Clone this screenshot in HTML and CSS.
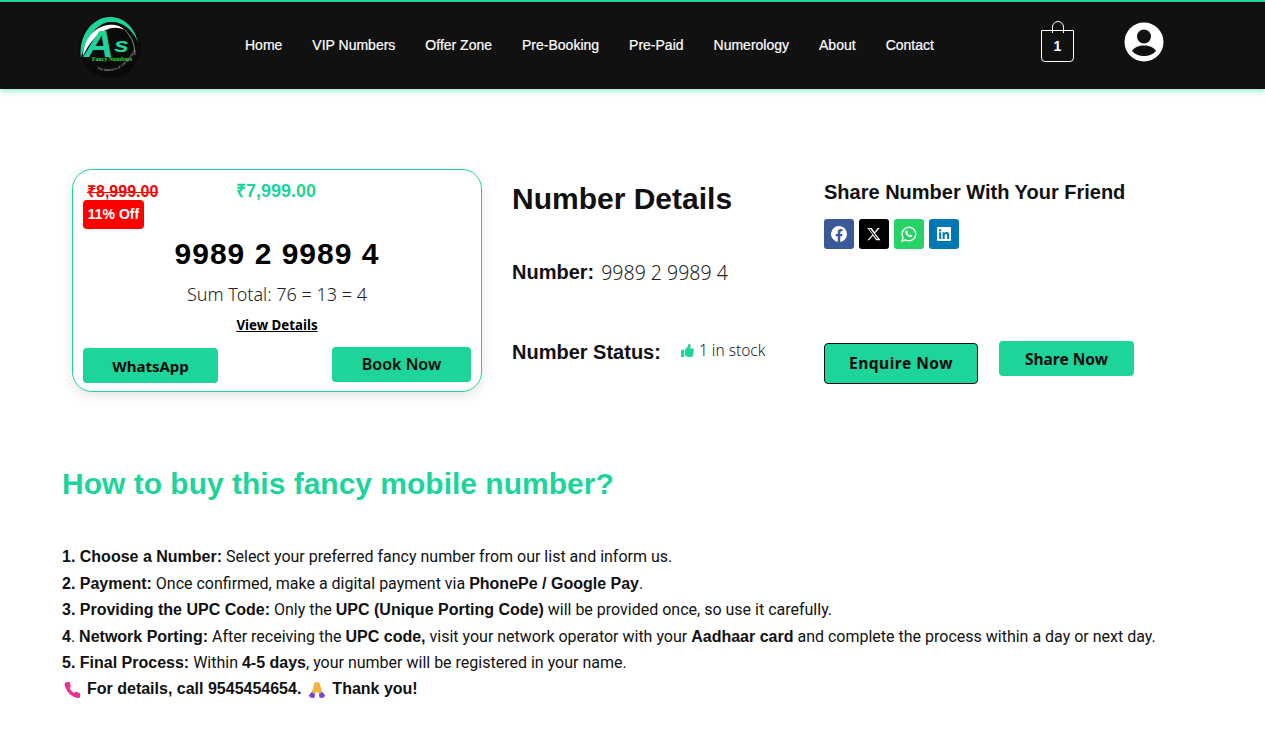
FILE: index.html
```html
<!DOCTYPE html>
<html lang="en">
<head>
<meta charset="utf-8">
<title>Number Details</title>
<link rel="stylesheet" href="styles.css">
</head>
<body>
<header class="site-header">
  <div class="logo">
    <svg width="64" height="64" viewBox="0 0 64 64" aria-hidden="true">
      <circle cx="32" cy="32" r="31" fill="#0a0a0a"/>
      <path d="M3 43C0 20 15 2 32 2c14 0 24 10 28 25C54 14 44 6 32 7 18 8 8 24 3 43z" fill="#1dd49a"/>
      <path d="M5 41C6 24 16 12 30 10c6-1 12 0 17 5-7-3-13-3-19 0C18 19 10 30 5 41z" fill="#fff"/>
      <path d="M47 15c6 6 10 14 10 25" fill="none" stroke="#bbb" stroke-width=".7"/>
      <text x="6" y="42" class="logo-a" textLength="30" lengthAdjust="spacingAndGlyphs">A</text>
      <text x="36" y="37" class="logo-s" textLength="15" lengthAdjust="spacingAndGlyphs">s</text>
      <text x="14" y="46" class="logo-sub" textLength="40" lengthAdjust="spacingAndGlyphs">Fancy Numbers</text>
      <path id="logo-curve" d="M19 54C36 61 55 50 60 27" fill="none"/>
      <text class="logo-tiny"><textPath href="#logo-curve">The Masters of VIP Numbers</textPath></text>
    </svg>
  </div>
  <nav class="nav">
    <a>Home</a><a>VIP Numbers</a><a>Offer Zone</a><a>Pre-Booking</a><a>Pre-Paid</a><a>Numerology</a><a>About</a><a>Contact</a>
  </nav>
  <div class="bag">
    <svg class="bag-handle" width="12" height="12" viewBox="0 0 12 12" aria-hidden="true"><path d="M.5 12V6a5.500 5.500 0 0 1 11 0v6" fill="none" stroke="#fff" stroke-width="1"/></svg>
    <span class="bag-count">1</span>
  </div>
  <svg class="user" width="40" height="40" viewBox="0 0 40 40" aria-hidden="true">
    <circle cx="20" cy="20" r="19.500" fill="#fff"/>
    <circle cx="20" cy="14.500" r="7" fill="#111"/>
    <path d="M8 29c2.500-4 7-5.500 12-5.500S29.500 25 32 29c-3 3.500-7 5-12 5s-9-1.500-12-5z" fill="#111"/>
  </svg>
</header>

<main class="main">
  <section class="product">
    <div class="card">
      <div class="prices">
        <del class="old">₹8,999.00</del>
        <span class="new">₹7,999.00</span>
      </div>
      <span class="off">11% Off</span>
      <div class="num">9989 2 9989 4</div>
      <div class="sum">Sum Total: 76 = 13 = 4</div>
      <a class="view">View Details</a>
      <div class="card-actions">
        <a class="btn btn-wa">WhatsApp</a>
        <a class="btn btn-book">Book Now</a>
      </div>
    </div>

    <div class="details">
      <h2 class="details-title">Number Details</h2>
      <div class="detail-row detail-number"><strong>Number:</strong><span>9989 2 9989 4</span></div>
      <div class="detail-row detail-status"><strong>Number Status:</strong>
        <span class="stock">
          <svg width="13" height="13" viewBox="0 0 512 512" aria-hidden="true"><path fill="#1dd49a" d="M104 224H24c-13 0-24 11-24 24v240c0 13 11 24 24 24h80c13 0 24-11 24-24V248c0-13-11-24-24-24zM384 81c0 42-26 66-33 95h102c33 0 59 28 59 59 0 19-8 39-20 52 0 0 0 0 0 0 10 24 8 57-9 80 8 25 0 56-16 72 4 18 2 33-7 45-20 29-71 30-114 30h-3c-48 0-88-18-120-32-16-7-37-16-53-16-7 0-12-5-12-12V240c0-3 1-6 4-8 39-39 56-80 88-112 15-15 20-37 25-59 5-18 13-61 34-61 24 0 75 8 75 81z"/></svg>
          1 in stock
        </span>
      </div>
    </div>

    <div class="share">
      <h3 class="share-title">Share Number With Your Friend</h3>
      <div class="socials">
        <a class="soc soc-fb"><svg width="16" height="16" viewBox="0 0 16 16" aria-hidden="true"><path fill="#fff" d="M16 8a8 8 0 1 0-9.250 7.900V10.300H4.700V8h2.050V6.240c0-2 1.200-3.120 3-3.120.88 0 1.800.16 1.800.16v1.970h-1c-1 0-1.300.62-1.300 1.250V8h2.220l-.35 2.300H9.250v5.600A8 8 0 0 0 16 8z"/></svg></a>
        <a class="soc soc-x"><svg width="14" height="14" viewBox="0 0 24 24" aria-hidden="true"><path fill="#fff" d="M18.200 1.500h3.700l-8 9.200L23.300 22.500h-7.400l-5.800-7.600-6.600 7.600H.8l8.600-9.800L.4 1.500H8l5.200 6.900zm-1.300 19h2L5.800 3.500H3.600z"/></svg></a>
        <a class="soc soc-wa"><svg width="16" height="16" viewBox="0 0 16 16" aria-hidden="true"><path fill="none" stroke="#fff" stroke-width="1.400" d="M1 15l1-3.600A6.800 6.800 0 1 1 4.600 14z"/><path fill="#fff" d="M5.600 4.400c.3 0 .5 0 .7.400l.6 1.300c0 .3-.4.700-.6 1 .5 1 1.300 1.700 2.500 2.300.3-.3.600-.8.900-.8l1.300.6c.3.200.2.600.1 1-.3.700-1.100 1.100-1.800 1-2.400-.4-4.200-2.200-4.900-4.200-.2-1 .2-1.800.6-2.300z"/></svg></a>
        <a class="soc soc-in"><svg width="14" height="14" viewBox="0 0 14 14" aria-hidden="true"><path fill="#fff" fill-rule="evenodd" d="M1 0h12a1 1 0 0 1 1 1v12a1 1 0 0 1-1 1H1a1 1 0 0 1-1-1V1a1 1 0 0 1 1-1zm1.100 5.300V12h2.100V5.300zM3.150 2a1.200 1.200 0 1 0 0 2.400 1.200 1.200 0 0 0 0-2.400zM5.600 5.300V12h2.100V8.700c0-.9.200-1.700 1.300-1.700s1.100 1 1.100 1.800V12H12.200V8.300c0-1.800-.4-3.200-2.500-3.200-1 0-1.700.6-2 1.100V5.300z"/></svg></a>
      </div>
      <div class="share-actions">
        <a class="btn btn-enquire">Enquire Now</a>
        <a class="btn btn-share">Share Now</a>
      </div>
    </div>
  </section>

  <section class="howto">
    <h2 class="howto-title">How to buy this fancy mobile number?</h2>
    <div class="steps">
      <p><b>1. Choose a Number:</b> Select your preferred fancy number from our list and inform us.</p>
      <p><b>2. Payment:</b> Once confirmed, make a digital payment via <b>PhonePe / Google Pay</b>.</p>
      <p><b>3. Providing the UPC Code:</b> Only the <b>UPC (Unique Porting Code)</b> will be provided once, so use it carefully.</p>
      <p><b>4</b>. <b>Network Porting:</b> After receiving the <b>UPC code,</b> visit your network operator with your <b>Aadhaar card</b> and complete the process within a day or next day.</p>
      <p><b>5. Final Process:</b> Within <b>4-5 days</b>, your number will be registered in your name.</p>
      <p class="last">
        <svg class="emoji" width="18" height="18" viewBox="0 0 18 18" aria-hidden="true"><path fill="#e8348e" d="M1.500 1.500 5.500.8l1.500 4.700-1.500 1.300c.8 2.200 2.700 4.300 5 5.300l1-1.600 4.500 1.700.2 3.300c-.3 1.200-1.300 1.800-2.600 1.500C7.500 16 2 10.500.8 4.200.6 3 .7 2 1.500 1.500z"/></svg>
        <b>For details, call 9545454654.</b>
        <svg class="emoji emoji-pray" width="18" height="18" viewBox="0 0 18 18" aria-hidden="true"><path fill="#f5b13d" d="M8 1C7 1 6.500 2 6 3.500L3.800 11.500l2.700 1.500 2.500-2.500 2.500 2.500 2.700-1.500L12 3.500C11.500 2 11 1 10 1 9.500 1 9.200 1.400 9 2 8.800 1.400 8.500 1 8 1z"/><path fill="#7a45d6" d="M.8 14.500 3.500 11l3.500 2-.4 3.500c-1.800 1-4.800.5-5.800-2zM17.200 14.500 14.500 11 11 13l.4 3.500c1.800 1 4.800.5 5.800-2z"/></svg>
        <b>Thank you!</b>
      </p>
    </div>
  </section>
</main>
</body>
</html>
```
FILE: styles.css
```css
* { box-sizing: border-box; }
html, body { margin: 0; padding: 0; }
body {
  background: #fff;
  color: #111;
  font-family: "Liberation Sans", Arial, sans-serif;
  overflow: hidden;
  height: 743px;
}
a { color: inherit; text-decoration: none; }

.site-header {
  height: 89px;
  background: #111;
  border-top: 2px solid #1dd49a;
  box-shadow: 0 2px 6px rgba(29, 212, 154, .5);
  display: flex;
  align-items: center;
  padding: 0 101px 0 78px;
}
.logo { width: 64px; height: 64px; margin-top: 3px; }
.logo-a { font: italic 700 36px "Liberation Sans", sans-serif; fill: #1dd49a; }
.logo-s { font: italic 700 21px "Liberation Sans", sans-serif; fill: #1dd49a; }
.logo-sub { font: 700 6px "Liberation Serif", serif; fill: #22e03a; }
.logo-tiny { font: 700 3.500px "Liberation Sans", sans-serif; fill: #888; }
.nav {
  display: flex;
  gap: 30px;
  margin-left: 103px;
  margin-top: -2px;
  font-size: 14px;
  font-weight: 400;
  color: #fff;
  -webkit-text-stroke: .2px #fff;
}
.bag {
  position: relative;
  width: 33px;
  height: 32px;
  margin-left: 107px;
  margin-top: 1px;
  border: 1px solid #fff;
  border-radius: 0 0 4px 4px;
  display: flex;
  align-items: center;
  justify-content: center;
  color: #fff;
  font-weight: 700;
  font-size: 14px;
}
.bag-handle { position: absolute; top: -10px; left: 10px; }
.user { margin-left: 50px; margin-top: -8px; }

.main { padding: 0 62px; }
.product {
  display: flex;
  align-items: flex-start;
  padding: 80px 0 0 10px;
}
.card {
  width: 410px;
  height: 223px;
  border: 1px solid #1dd49a;
  border-radius: 20px;
  box-shadow: 0 4px 12px rgba(0, 0, 0, .1);
  padding: 10px;
  display: flex;
  flex-direction: column;
  position: relative;
}
.prices { display: flex; height: 20px; }
.old {
  color: #f00;
  font-size: 16px;
  font-weight: 700;
  margin-left: 4px;
  width: 149px;
}
.new {
  color: #1dd49a;
  font-size: 18px;
  font-weight: 700;
  line-height: 22px;
}
.off {
  align-self: flex-start;
  background: #f00;
  color: #fff;
  font-size: 14px;
  font-weight: 700;
  padding: 6px 4px;
  width: 61px;
  text-align: center;
  height: 29px;
  border-radius: 4px;
  line-height: 17px;
}
.num {
  text-align: center;
  font-size: 30px;
  font-weight: 700;
  letter-spacing: 1px;
  color: #000;
  line-height: 36px;
  margin-top: 7px;
}
.sum {
  text-align: center;
  font-family: "Noto Sans", sans-serif;
  font-size: 18px;
  font-weight: 300;
  color: #222;
  line-height: 22px;
  margin-top: 11px;
}
.view {
  align-self: center;
  font-family: "Noto Sans", sans-serif;
  font-weight: 700;
  font-size: 13.300px;
  color: #000;
  text-decoration: underline;
  line-height: 18px;
  margin-top: 11px;
}
.card-actions { display: flex; justify-content: space-between; align-items: flex-start; margin-top: 13px; }
.btn {
  display: flex;
  align-items: center;
  justify-content: center;
  background: #1dd49a;
  border-radius: 4px;
  font-family: "Noto Sans", sans-serif;
  font-weight: 700;
  color: #0b0b0b;
  width: 135px;
  height: 35px;
  font-size: 15px;
}
.btn-wa { margin-top: 1px; }
.btn-book { width: 139px; font-size: 16px; font-weight: 600; padding-bottom: 2px; }

.details { width: 312px; margin-left: 30px; }
.details-title { font-size: 30px; font-weight: 700; margin: 12px 0 0; line-height: 36px; }
.detail-row { display: flex; align-items: baseline; }
.detail-row strong { font-size: 20px; }
.detail-row span { font-family: "Noto Sans", sans-serif; color: #222; line-height: 1; }
.detail-number { margin-top: 44px; gap: 7px; }
.detail-number span { font-size: 19.500px; font-weight: 300; position: relative; top: 1px; }
.detail-status { margin-top: 57px; gap: 20px; }
.stock { font-size: 15.500px; font-weight: 300; display: inline-flex; align-items: center; gap: 5px; position: relative; top: -2px; }

.share-title { font-size: 20px; font-weight: 700; margin: 11px 0 0; line-height: 24px; }
.socials { display: flex; gap: 5px; margin-top: 15px; }
.soc { width: 30px; height: 30px; border-radius: 3px; display: flex; align-items: center; justify-content: center; }
.soc-fb { background: #3b5998; }
.soc-x { background: #000; }
.soc-wa { background: #25d366; }
.soc-in { background: #0077b5; }
.share-actions { display: flex; align-items: flex-start; gap: 21px; margin-top: 92px; }
.btn-enquire { width: 154px; height: 41px; border: 1px solid #111; margin-top: 2px; font-size: 15.500px; letter-spacing: .5px; padding-bottom: 2px; }
.btn-share { width: 135px; height: 35px; font-size: 15.500px; padding-top: 1px; }

.howto { padding-top: 74px; }
.howto-title { color: #1dd49a; font-size: 30px; font-weight: 700; margin: 0; line-height: 36px; }
.steps { margin-top: 42.400px; font-family: Roboto, sans-serif; font-size: 16px; color: #111; }
.steps p { margin: 0; line-height: 26.400px; }
.steps b { font-family: "Liberation Sans", sans-serif; font-weight: 700; }
.last { display: flex; align-items: center; gap: 4px; margin: 0; }
.emoji { margin: 0 1px 0 2px; }
.emoji-pray { margin: 0 2px 0 3px; }
```
